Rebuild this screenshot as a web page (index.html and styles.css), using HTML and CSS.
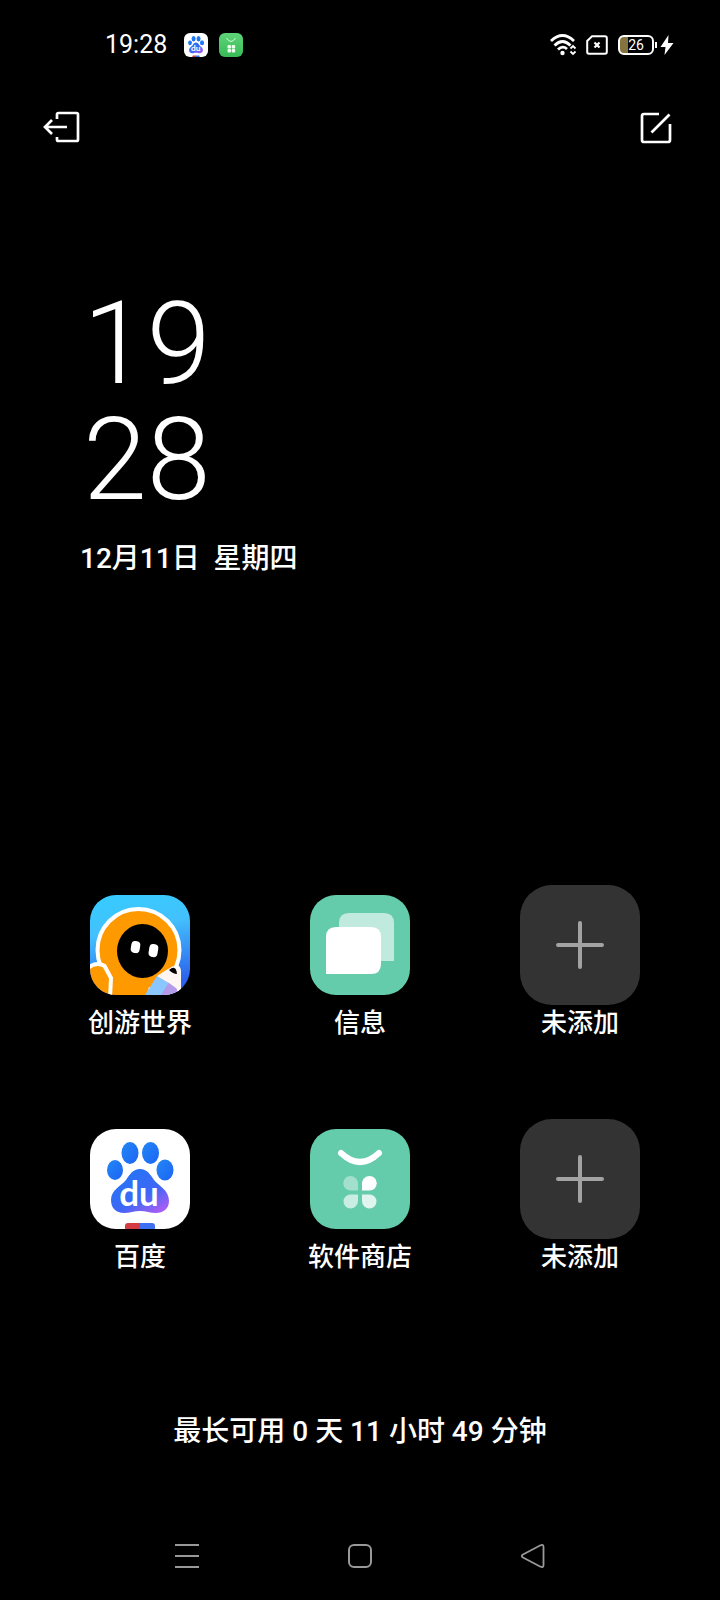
FILE: index.html
```html
<!DOCTYPE html>
<html lang="zh-CN">
<head>
    <meta charset="UTF-8">
    <meta name="viewport" content="width=device-width, initial-scale=1.0">
    <title>超级省电模式</title>
    <link rel="stylesheet" href="styles.css">
</head>
<body>

<!-- Shared drawings -->
<svg class="defs" aria-hidden="true">
    <defs>
        <linearGradient id="paw-blue" x1="0" y1="0" x2="1" y2="1">
            <stop offset="0" stop-color="#2387f4"/>
            <stop offset="1" stop-color="#1c64f5"/>
        </linearGradient>
        <linearGradient id="paw-body" x1="0.1" y1="0" x2="0.9" y2="1">
            <stop offset="0" stop-color="#1f78f4"/>
            <stop offset="0.6" stop-color="#3f66f6"/>
            <stop offset="1" stop-color="#b45cf3"/>
        </linearGradient>
        <linearGradient id="sky" x1="0" y1="0" x2="0.2" y2="1">
            <stop offset="0" stop-color="#35ccff"/>
            <stop offset="0.4" stop-color="#43c1fd"/>
            <stop offset="1" stop-color="#2c62ec"/>
        </linearGradient>
        <linearGradient id="green" x1="0" y1="0" x2="0" y2="1">
            <stop offset="0" stop-color="#5fd478"/>
            <stop offset="1" stop-color="#38bb58"/>
        </linearGradient>
        <symbol id="baidu" viewBox="0 0 100 100">
            <rect width="100" height="100" fill="#fff"/>
            <ellipse cx="25" cy="41" rx="8" ry="10" fill="url(#paw-blue)"/>
            <ellipse cx="40" cy="24" rx="8.500" ry="11" fill="url(#paw-blue)"/>
            <ellipse cx="60.500" cy="24" rx="8.500" ry="11" fill="url(#paw-blue)"/>
            <ellipse cx="75" cy="41" rx="8.500" ry="10.500" fill="url(#paw-blue)"/>
            <path d="M50 40C57 40 60 45 64 51C69 57 79 61 79 72C79 80 73 84 66 84C60 84 56 82 50 82C44 82 40 84 34 84C26 84 21 79 21 71C21 61 31 57 36 51C40 45 43 40 50 40Z" fill="url(#paw-body)"/>
            <text class="du" x="49" y="77" text-anchor="middle">du</text>
            <path d="M38 94H50V100H35V97Q35 94 38 94Z" fill="#d43c43"/>
            <path d="M50 94H62Q65 94 65 97V100H50Z" fill="#3e6ff0"/>
        </symbol>
        <symbol id="store" viewBox="0 0 100 100">
            <path d="M31 24Q50 42 69 24" fill="none" stroke="#fff" stroke-width="6" stroke-linecap="round"/>
            <path d="M40.500 47A7.500 7.500 0 0 1 48 54.500V61.500H40.500A7.250 7.250 0 0 1 40.500 47Z" fill="#fff" opacity="0.4"/>
            <path d="M59.500 47A7.250 7.250 0 0 1 59.500 61.500H52V54.500A7.500 7.500 0 0 1 59.500 47Z" fill="#fff"/>
            <path d="M40.500 65.500H48V72A7.500 7.500 0 0 1 40.500 79.500A7 7 0 0 1 40.500 65.500Z" fill="#fff" opacity="0.65"/>
            <path d="M52 65.500H59.500A7 7 0 0 1 59.500 79.500A7.500 7.500 0 0 1 52 72Z" fill="#fff" opacity="0.8"/>
        </symbol>
    </defs>
</svg>

<header class="status-bar">
    <div class="status-left">
        <time class="status-time">19:28</time>
        <svg class="mini-icon" role="img" aria-label="百度"><use href="#baidu"/></svg>
        <svg class="mini-icon" viewBox="0 0 24 24" role="img" aria-label="软件商店">
            <rect width="24" height="24" fill="url(#green)"/>
            <path d="M7.500 5Q12 12 16.500 5" fill="none" stroke="#d8ffdf"/>
            <g fill="#eaffed">
                <rect x="8.500" y="12" width="3.500" height="3.500" rx="1"/>
                <rect x="12.700" y="12" width="3.500" height="3.500" rx="1"/>
                <rect x="8.500" y="16" width="3.500" height="3.500" rx="1"/>
                <rect x="12.700" y="16" width="3.500" height="3.500" rx="1"/>
            </g>
        </svg>
    </div>
    <div class="status-right">
        <svg width="28" height="24" viewBox="0 0 28 24" role="img" aria-label="WLAN">
            <g fill="none" stroke="#fff" stroke-width="2.800">
                <path d="M1 8Q12.500 -3 24 8"/>
                <path d="M4.500 12.500Q12.500 4.500 20.500 12.500"/>
                <path d="M8 16.500Q12.500 12 17 16"/>
            </g>
            <circle cx="12.500" cy="20" r="2.200" fill="#fff"/>
            <path d="M20.500 15.500L23 13L25.500 15.500M20.500 18.500L23 21L25.500 18.500" fill="none" stroke="#fff" stroke-width="1.800"/>
        </svg>
        <svg width="22" height="20" viewBox="0 0 22 20" role="img" aria-label="无 SIM 卡">
            <path d="M6 1.200H19Q20.800 1.200 20.800 3V17Q20.800 18.800 19 18.800H3Q1.200 18.800 1.200 17V6Z" fill="none" stroke="#fff" stroke-width="2"/>
            <path d="M8.500 7.500L13.500 12.500M13.500 7.500L8.500 12.500" stroke="#fff" stroke-width="2.200"/>
        </svg>
        <div class="battery-group">
            <div class="battery">26</div>
            <span class="battery-cap"></span>
            <svg width="14" height="22" viewBox="0 0 14 22" role="img" aria-label="充电中">
                <path d="M8.500 1L0.500 13H5.500L4.500 21L13.500 9H8Z" fill="#fff"/>
            </svg>
        </div>
    </div>
</header>

<nav class="toolbar">
    <button class="icon-btn" aria-label="退出">
        <svg width="38" height="34" viewBox="0 0 38 34">
            <path d="M14 8V3.500Q14 2 15.500 2H33.500Q35 2 35 3.500V28.500Q35 30 33.500 30H15.500Q14 30 14 28.500V26M24 16H2.500M9 9L2 16L9 23" fill="none" stroke="#fff" stroke-width="2.700"/>
        </svg>
    </button>
    <button class="icon-btn" aria-label="编辑">
        <svg width="32" height="32" viewBox="0 0 32 32">
            <path d="M19 2H4Q2 2 2 4V28Q2 30 4 30H28Q30 30 30 28V12" fill="none" stroke="#fff" stroke-width="2.700"/>
            <path d="M29.500 2.500L11.500 20.500" stroke="#fff" stroke-width="2.700"/>
        </svg>
    </button>
</nav>

<section class="clock">
    <time class="clock-digits">19<br>28</time>
    <p class="date">12月11日&nbsp; 星期四</p>
</section>

<main class="apps">
    <a class="app" href="#">
        <span class="app-slot">
            <svg class="app-icon" viewBox="0 0 100 100" aria-hidden="true">
                <rect width="100" height="100" fill="url(#sky)"/>
                <path d="M86 70Q91 70 91 77V100H60Z" fill="#fff"/>
                <circle cx="48.500" cy="55" r="41" fill="#fe9900" stroke="#fff" stroke-width="4"/>
                <path d="M-3 74Q5 66 15 71L24 76L60 88L56 103H-3Z" fill="#fe9900"/>
                <path d="M-3 74Q5 66 15 71" fill="none" stroke="#fff" stroke-width="4"/>
                <path d="M14 70L21 83L20 103" fill="none" stroke="#fff" stroke-width="4"/>
                <ellipse cx="52.500" cy="56" rx="25.500" ry="27" fill="#000"/>
                <rect x="41" y="46" width="9" height="12" rx="4" fill="#fff" transform="rotate(9 45 52)"/>
                <rect x="59" y="49" width="9" height="13" rx="4" fill="#fff" transform="rotate(9 63 55)"/>
                <path d="M67 81L55 100H72L80 88Z" fill="#8bc7ff"/>
                <path d="M79 87L71 100H87V93Z" fill="#b49be9"/>
                <path d="M67 81Q76 75 83 71L91 76V100L86 93L79 88Z" fill="#fff5f2"/>
                <path d="M79 75Q86 69 87 79Q83 79 79 75Z" fill="#000"/>
            </svg>
        </span>
        <span class="app-name">创游世界</span>
    </a>
    <a class="app" href="#">
        <span class="app-slot">
            <svg class="app-icon teal" viewBox="0 0 100 100" aria-hidden="true">
                <path d="M39 18H74Q84 18 84 28V66H29V28Q29 18 39 18Z" fill="#c0eadd"/>
                <path d="M26 32H61Q71 32 71 42V69Q71 79 61 79H16V42Q16 32 26 32Z" fill="#fff"/>
            </svg>
        </span>
        <span class="app-name">信息</span>
    </a>
    <button class="app">
        <span class="app-slot empty">
            <svg width="48" height="48" viewBox="0 0 48 48" aria-hidden="true">
                <path d="M24 2V46M2 24H46" stroke="#a3a3a3" stroke-width="4" stroke-linecap="round"/>
            </svg>
        </span>
        <span class="app-name">未添加</span>
    </button>
    <a class="app" href="#">
        <span class="app-slot">
            <svg class="app-icon" aria-hidden="true"><use href="#baidu"/></svg>
        </span>
        <span class="app-name">百度</span>
    </a>
    <a class="app" href="#">
        <span class="app-slot">
            <svg class="app-icon teal" aria-hidden="true"><use href="#store"/></svg>
        </span>
        <span class="app-name">软件商店</span>
    </a>
    <button class="app">
        <span class="app-slot empty">
            <svg width="48" height="48" viewBox="0 0 48 48" aria-hidden="true">
                <path d="M24 2V46M2 24H46" stroke="#a3a3a3" stroke-width="4" stroke-linecap="round"/>
            </svg>
        </span>
        <span class="app-name">未添加</span>
    </button>
</main>

<p class="remaining">最长可用 0 天 11 小时 49 分钟</p>

<footer class="nav-bar">
    <button class="icon-btn" aria-label="最近任务">
        <svg width="24" height="24" viewBox="0 0 24 24">
            <path d="M0 1H24M0 12H24M0 23H24" stroke="#999" stroke-width="2"/>
        </svg>
    </button>
    <button class="icon-btn" aria-label="主屏幕">
        <svg width="24" height="24" viewBox="0 0 24 24">
            <rect x="1" y="1" width="22" height="22" rx="5" fill="none" stroke="#999" stroke-width="2"/>
        </svg>
    </button>
    <button class="icon-btn" aria-label="返回">
        <svg width="24" height="24" viewBox="0 0 24 24">
            <path d="M2 10.500L19.500 1.300Q22.500 0 22.500 3V21Q22.500 24 19.500 22.700L2 13.500Q-0.500 12 2 10.500Z" fill="none" stroke="#999" stroke-width="1.800"/>
        </svg>
    </button>
</footer>

</body>
</html>
```

FILE: styles.css
```css
* {
    box-sizing: border-box;
}

body {
    display: flex;
    flex-direction: column;
    min-height: 100vh;
    margin: 0;
    background-color: #000;
    color: #fff;
    font-family: Roboto, "Noto Sans CJK SC", sans-serif;
    font-weight: 500;
}

svg {
    display: block;
}

button {
    padding: 0;
    border: none;
    background: none;
    color: inherit;
    font: inherit;
    cursor: pointer;
}

.defs {
    position: absolute;
    width: 0;
    height: 0;
}

/* Status bar */
.status-bar {
    display: flex;
    justify-content: space-between;
    align-items: center;
    height: 90px;
    padding: 0 46px 0 105px;
}

.status-left {
    display: flex;
    align-items: center;
    gap: 11px;
}

.status-time {
    margin-right: 6px;
    font-size: 25px;
    font-weight: 400;
    line-height: 30px;
}

.mini-icon {
    width: 24px;
    height: 24px;
    border-radius: 6px;
}

.status-right {
    display: flex;
    align-items: center;
    gap: 8px;
}

.battery-group {
    display: flex;
    align-items: center;
    margin-left: 2px;
}

.battery {
    width: 36px;
    height: 20px;
    border: 2px solid #fff;
    border-radius: 6px;
    background: linear-gradient(to right, #85733f 26%, #000 26%);
    font-size: 14px;
    font-weight: 400;
    line-height: 16px;
    text-align: center;
}

.battery-cap {
    width: 2px;
    height: 6px;
    margin: 0 3px 0 1px;
    background-color: #fff;
}

/* Exit and edit buttons */
.toolbar {
    display: flex;
    justify-content: space-between;
    align-items: center;
    height: 76px;
    padding: 0 48px 0 43px;
}

/* Clock */
.clock {
    padding: 120px 80px 0;
}

.clock-digits {
    display: block;
    padding-left: 3px;
    font-size: 115px;
    font-weight: 300;
    line-height: 116px;
}

.date {
    margin: 22px 0 0;
    font-size: 28px;
    line-height: 38px;
}

/* App grid */
.apps {
    display: grid;
    grid-template-columns: repeat(3, 1fr);
    row-gap: 78px;
    padding: 307px 30px 0;
}

.app {
    display: flex;
    flex-direction: column;
    align-items: center;
    color: #fff;
    text-decoration: none;
}

.app-slot {
    display: flex;
    justify-content: center;
    align-items: center;
    width: 120px;
    height: 120px;
}

.app-slot.empty {
    border-radius: 32px;
    background-color: #333;
}

.app-icon {
    width: 100px;
    height: 100px;
    border-radius: 26px;
}

.teal {
    background-color: #64cbab;
}

.app-name {
    font-size: 26px;
    line-height: 36px;
}

.du {
    fill: #fff;
    font-family: Lato, sans-serif;
    font-size: 35px;
    font-weight: 700;
}

.remaining {
    margin: 138px 0 0;
    font-size: 28px;
    line-height: 38px;
    text-align: center;
}

/* System navigation */
.nav-bar {
    display: grid;
    grid-template-columns: repeat(3, 1fr);
    justify-items: center;
    align-items: center;
    height: 88px;
    margin-top: auto;
    padding: 0 14%;
}
```
